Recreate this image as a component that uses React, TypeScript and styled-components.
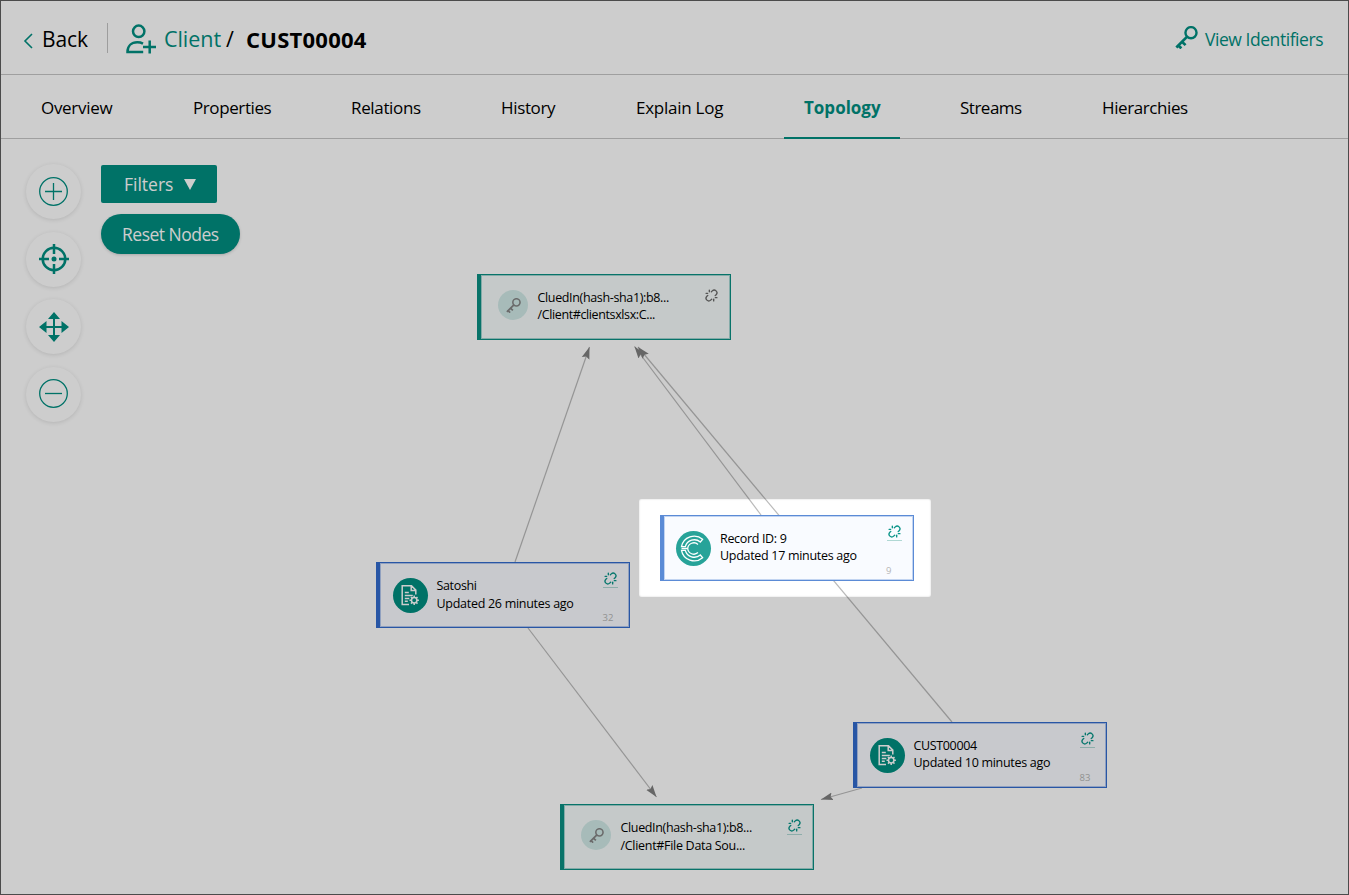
import React from 'react';
import styled, { createGlobalStyle } from 'styled-components';
import { Unlink as UnlinkGlyph } from 'lucide-react';

const TEAL = '#008e81';

const GlobalStyle = createGlobalStyle`
  * { box-sizing: border-box; }
  body { margin: 0; background: #fff; font-family: "Open Sans", "Noto Sans", sans-serif; color: #000; }
`;

const Page = styled.div`
  position: relative;
  width: 1349px;
  height: 895px;
  overflow: hidden;
  background: #fff;
  display: flex;
  flex-direction: column;
`;

const Text = styled.span<{ $size: number; $track?: number; $weight?: number; $color?: string }>`
  font-size: ${(p) => p.$size}px;
  letter-spacing: ${(p) => p.$track ?? 0}px;
  font-weight: ${(p) => p.$weight ?? 400};
  color: ${(p) => p.$color ?? '#000'};
  white-space: nowrap;
`;

const Header = styled.header`
  display: flex;
  align-items: center;
  height: 75px;
  padding: 3px 25px 0 23px;
  border-bottom: 1px solid #c6c6c6;
`;

const BackLink = styled.a`
  display: flex;
  align-items: center;
  gap: 8px;
  width: 84px;
  svg { margin-top: 4px; }
`;

const Divider = styled.i`
  width: 1px;
  height: 30px;
  background: #c4c4c4;
  margin: 0 18px 2px 0;
`;

const Crumbs = styled.div`
  display: flex;
  align-items: center;
  flex: 1;
`;

const CrumbIcon = styled.span`
  display: flex;
  width: 38px;
`;

const CrumbPart = styled.span<{ $w: number }>`
  display: flex;
  width: ${(p) => p.$w}px;
`;

const Identifiers = styled.a`
  display: flex;
  align-items: center;
  gap: 7px;
  width: 149px;
  padding-bottom: 2px;
  ${Text} { padding-top: 3px; }
`;

const Tabs = styled.nav`
  display: flex;
  gap: 40px;
  height: 64px;
  padding-left: 21px;
  border-bottom: 1px solid #c6c6c6;
`;

const Tab = styled.a<{ $w: number; $active?: boolean }>`
  display: flex;
  align-items: center;
  width: ${(p) => p.$w}px;
  height: 64px;
  padding: 2px 0 0 20px;
  border-bottom: 2px solid ${(p) => (p.$active ? TEAL : 'transparent')};
`;

const Canvas = styled.main`
  position: relative;
  flex: 1;
  display: flex;
  align-items: flex-start;
  padding: 26px 0 0 26px;
`;

const ZoomTools = styled.div`
  display: flex;
  flex-direction: column;
  gap: 12.6px;
  width: 75px;
  margin-top: -1px;
`;

const RoundButton = styled.button`
  display: flex;
  align-items: center;
  justify-content: center;
  width: 55px;
  height: 55px;
  padding: 0;
  border: 0;
  border-radius: 50%;
  background: #fff;
  box-shadow: 0 1px 4px rgba(0, 0, 0, 0.12);
`;

const Actions = styled.div`
  display: flex;
  flex-direction: column;
  align-items: flex-start;
  gap: 11px;
`;

const FiltersButton = styled.button`
  display: flex;
  align-items: center;
  gap: 11px;
  width: 116px;
  height: 38px;
  padding: 0 0 0 23px;
  border: 0;
  border-radius: 2px;
  font-family: inherit;
  background: ${TEAL};
`;

const ResetButton = styled.button`
  display: flex;
  align-items: center;
  width: 139px;
  height: 40px;
  padding: 0 0 0 21px;
  border: 0;
  border-radius: 20px;
  font-family: inherit;
  background: ${TEAL};
  box-shadow: 0 1px 3px rgba(0, 0, 0, 0.18);
`;

const Edges = styled.svg`
  position: absolute;
  left: 0;
  top: -139px;
  pointer-events: none;
`;

const NodeCard = styled.div<{ $x: number; $y: number; $line: string; $fill: string }>`
  position: absolute;
  left: ${(p) => p.$x}px;
  top: ${(p) => p.$y - 139}px;
  display: flex;
  width: 254px;
  height: 66px;
  border: 1px solid ${(p) => p.$line};
  border-left-width: 4px;
  box-shadow: inset 0 0 0 1px ${(p) => p.$line}59;
  background: ${(p) => p.$fill};
`;

const Avatar = styled.span<{ $key?: boolean; $bg: string }>`
  flex: none;
  display: flex;
  align-items: center;
  justify-content: center;
  width: ${(p) => (p.$key ? 30 : 35)}px;
  height: ${(p) => (p.$key ? 30 : 35)}px;
  margin: ${(p) => (p.$key ? '15px 9.5px 0 17px' : '14.5px 9px 0 12.5px')};
  border-radius: 50%;
  background: ${(p) => p.$bg};
`;

const NodeText = styled.div<{ $lh: number }>`
  display: flex;
  flex-direction: column;
  flex: 1;
  padding-top: 14px;
  line-height: ${(p) => p.$lh}px;
`;

const NodeSide = styled.div`
  display: flex;
  flex-direction: column;
  justify-content: space-between;
  align-items: center;
  width: 16px;
  margin-right: 10.5px;
  padding: 8px 0 2px;
`;

const Unlink = styled.span<{ $line?: boolean; $shift?: number }>`
  display: flex;
  justify-content: center;
  width: 15px;
  height: 17px;
  margin-top: ${(p) => p.$shift ?? 0}px;
  padding-top: 1px;
  border-bottom: ${(p) => (p.$line ? '1px solid #b0d8d4' : '0')};
`;

const Count = styled(Text)`
  line-height: 14px;
  align-self: flex-start;
`;

const Spotlight = styled.div`
  position: absolute;
  left: 639px;
  top: 499px;
  width: 292px;
  height: 98px;
  border-radius: 2px;
  box-shadow: inset 0 0 2px rgba(0, 0, 0, 0.2), 0 0 0 1400px rgba(0, 0, 0, 0.196);
  pointer-events: none;
`;

const Frame = styled.div`
  position: absolute;
  inset: 0;
  border: 1px solid #4b4b4b;
  pointer-events: none;
`;

const KeyIcon = ({ size, color }: { size: number; color: string }) => (
  <svg width={size} height={size} viewBox="0 0 22 22" fill="none" stroke={color}>
    <circle cx="15.3" cy="6.400" r="5.300" strokeWidth="2.300" />
    <path d="M11.600 10.200 1.300 20.500" strokeWidth="2.600" />
    <path d="M2.600 18.200l3.500 3.200M6.400 14.800l3.700 3.500" strokeWidth="2.600" />
  </svg>
);

const DocIcon = () => (
  <svg width="21" height="23" viewBox="0 0 21 23" fill="none" stroke="#fff" strokeWidth="1.500">
    <path d="M9 20.500H2.200V1.800h9.300l4.300 4.300v4.400M11.200 2v4.600h4.400M4.800 8.500h4M4.800 11.500h8M4.800 14.500h4.500M4.800 17.300h3" />
    <circle cx="14.200" cy="16.300" r="2.700" />
    <path d="M14.200 11.600v2M14.200 19v2M9.500 16.300h2M16.900 16.300h2M10.900 13l1.400 1.400M16.100 18.200l1.400 1.400M10.900 19.600l1.400-1.400M16.100 14.400l1.400-1.400" />
  </svg>
);

const RecordIcon = () => (
  <svg width="35" height="35" viewBox="0 0 35 35" fill="none" stroke="#fff" strokeWidth="1.300">
    <path d="M26.600 8.300A12.900 12.900 0 0 0 5.500 15.700H9.300A9.300 9.300 0 0 1 24.300 11Z" />
    <path d="M5.500 19.300A12.900 12.900 0 0 0 26.600 26.700L24.300 24A9.300 9.300 0 0 1 9.300 19.300Z" />
    <path d="M5.500 17.500h6.300M22 13.400A6.200 6.200 0 0 0 11.700 17.500 6.200 6.200 0 0 0 22 21.600" />
  </svg>
);

const ClientIcon = () => (
  <svg width="31" height="30" viewBox="0 0 31 30" fill="none" stroke={TEAL} strokeWidth="2.500">
    <circle cx="12.700" cy="7.300" r="5.700" />
    <path d="M17.200 28H1.500c0-6 4-9.700 9.800-9.700 2.300 0 4 .4 5.700 1.300M23.700 16.500v13M17 23H30" />
  </svg>
);

const PlusIcon = ({ minus }: { minus?: boolean }) => (
  <svg width="30" height="30" viewBox="0 0 30 30" fill="none" stroke={TEAL} strokeWidth="1.300">
    <circle cx="14.500" cy="14.500" r="13.800" />
    <path d={minus ? 'M6 14.500h17' : 'M6 14.500h17M14.500 6v17'} />
  </svg>
);

const TargetIcon = () => (
  <svg width="30" height="30" viewBox="0 0 30 30" fill="none" stroke={TEAL} strokeWidth="2.500">
    <circle cx="15" cy="15" r="11.300" />
    <path d="M15 0v10M15 20v10M0 15h10M20 15h10" />
    <circle cx="15" cy="15" r="2.500" fill={TEAL} stroke="none" />
  </svg>
);

const MoveIcon = () => (
  <svg width="30" height="30" viewBox="0 0 30 30" fill={TEAL}>
    <path d="M15 0l6 7H9zM15 30l6-7H9zM0 15l7.500-6v12zM30 15l-7.500-6v12z" />
    <path d="M14 5h2v20h-2zM5 14h20v2H5z" />
  </svg>
);

type NodeData = {
  x: number; y: number; kind: 'key' | 'doc' | 'record';
  title: string; sub: string; t1: number; t2: number; lh: number;
  count?: string; plain?: boolean; shift?: number;
};

const nodes: NodeData[] = [
  { x: 477, y: 274, kind: 'key', title: 'CluedIn(hash-sha1):b8...', sub: '/Client#clientsxlsx:C...', t1: -0.35, t2: -0.38, lh: 17, plain: true, shift: 5 },
  { x: 376, y: 562, kind: 'doc', title: 'Satoshi', sub: 'Updated 26 minutes ago', t1: -0.35, t2: -0.28, lh: 18, count: '32' },
  { x: 659.5, y: 515, kind: 'record', title: 'Record ID: 9', sub: 'Updated 17 minutes ago', t1: -0.33, t2: -0.3, lh: 17, count: '9' },
  { x: 853, y: 722, kind: 'doc', title: 'CUST00004', sub: 'Updated 10 minutes ago', t1: -0.35, t2: -0.3, lh: 17, count: '83' },
  { x: 560, y: 804, kind: 'key', title: 'CluedIn(hash-sha1):b8...', sub: '/Client#File Data Sou...', t1: -0.35, t2: -0.3, lh: 18, shift: 5 },
];

const GraphNode = ({ n }: { n: NodeData }) => {
  const line = n.kind === 'key' ? '#0a9083' : n.kind === 'doc' ? '#326bce' : '#5b8bd6';
  const fill = n.kind === 'key' ? '#f6fbfa' : '#f9fbff';
  const bg = n.kind === 'key' ? '#d0e9e7' : n.kind === 'doc' ? TEAL : '#27a399';
  return (
    <NodeCard $x={n.x} $y={n.y} $line={line} $fill={fill}>
      <Avatar $key={n.kind === 'key'} $bg={bg}>
        {n.kind === 'key' ? <KeyIcon size={15} color="#858585" /> : n.kind === 'doc' ? <DocIcon /> : <RecordIcon />}
      </Avatar>
      <NodeText $lh={n.lh}>
        <Text $size={12.5} $track={n.t1}>{n.title}</Text>
        <Text $size={12.5} $track={n.t2}>{n.sub}</Text>
      </NodeText>
      <NodeSide>
        <Unlink $line={!n.plain} $shift={n.shift}>
          <UnlinkGlyph size={13} strokeWidth={2.5} color={n.plain ? '#6a6a6a' : '#0b9589'} />
        </Unlink>
        {n.count && <Count $size={9.5} $color="#b5b5b5">{n.count}</Count>}
      </NodeSide>
    </NodeCard>
  );
};

const tabs = [
  { label: 'Overview', w: 112, t: -0.3 },
  { label: 'Properties', w: 118, t: -0.4 },
  { label: 'Relations', w: 110, t: -0.35 },
  { label: 'History', w: 95, t: -0.35 },
  { label: 'Explain Log', w: 128, t: -0.25 },
  { label: 'Topology', w: 116, t: 0 },
  { label: 'Streams', w: 102, t: -0.5 },
  { label: 'Hierarchies', w: 126, t: -0.4 },
];

const edges = ['M515 562 589.500 347', 'M528 628 656.500 797', 'M761 515 634.500 346.500', 'M952 722 638 347', 'M862 788 821 799.500'];

export default function App() {
  return (
    <Page>
      <GlobalStyle />
      <Header>
        <BackLink>
          <svg width="11" height="16" viewBox="0 0 11 16" fill="none" stroke={TEAL} strokeWidth="1.600">
            <path d="M9 1 2 8l7 7" />
          </svg>
          <Text $size={21} $track={-0.1}>Back</Text>
        </BackLink>
        <Divider />
        <Crumbs>
          <CrumbIcon><ClientIcon /></CrumbIcon>
          <CrumbPart $w={62}><Text $size={21.5} $track={-0.05} $color={TEAL}>Client</Text></CrumbPart>
          <CrumbPart $w={20}><Text $size={21.5}>/</Text></CrumbPart>
          <Text $size={22} $track={0.25} $weight={700}>CUST00004</Text>
        </Crumbs>
        <Identifiers>
          <KeyIcon size={23} color={TEAL} />
          <Text $size={17.5} $track={-0.45} $color={TEAL}>View Identifiers</Text>
        </Identifiers>
      </Header>
      <Tabs>
        {tabs.map((t) => {
          const active = t.label === 'Topology';
          return (
            <Tab key={t.label} $w={t.w} $active={active}>
              <Text $size={17} $track={t.t} $weight={active ? 700 : 400} $color={active ? TEAL : '#000'}>{t.label}</Text>
            </Tab>
          );
        })}
      </Tabs>
      <Canvas>
        <ZoomTools>
          <RoundButton><PlusIcon /></RoundButton>
          <RoundButton><TargetIcon /></RoundButton>
          <RoundButton><MoveIcon /></RoundButton>
          <RoundButton><PlusIcon minus /></RoundButton>
        </ZoomTools>
        <Actions>
          <FiltersButton>
            <Text $size={17.5} $color="#fff">Filters</Text>
            <svg width="12" height="11" viewBox="0 0 12 11" fill="#fff"><path d="M0 0h12L6 11z" /></svg>
          </FiltersButton>
          <ResetButton><Text $size={17.5} $track={-0.5} $color="#fff">Reset Nodes</Text></ResetButton>
        </Actions>
        <Edges width="1349" height="895" viewBox="0 0 1349 895" fill="none" stroke="#bababa" strokeWidth="1.200">
          <defs>
            <marker id="arrow" markerUnits="userSpaceOnUse" markerWidth="14" markerHeight="10" refX="12" refY="5" orient="auto">
              <path d="M0 1 12 5 0 9 2 5z" fill="#7f7f7f" stroke="none" />
            </marker>
          </defs>
          {edges.map((d) => <path key={d} d={d} markerEnd="url(#arrow)" />)}
        </Edges>
        {nodes.map((n) => <GraphNode key={n.y} n={n} />)}
      </Canvas>
      <Spotlight />
      <Frame />
    </Page>
  );
}
